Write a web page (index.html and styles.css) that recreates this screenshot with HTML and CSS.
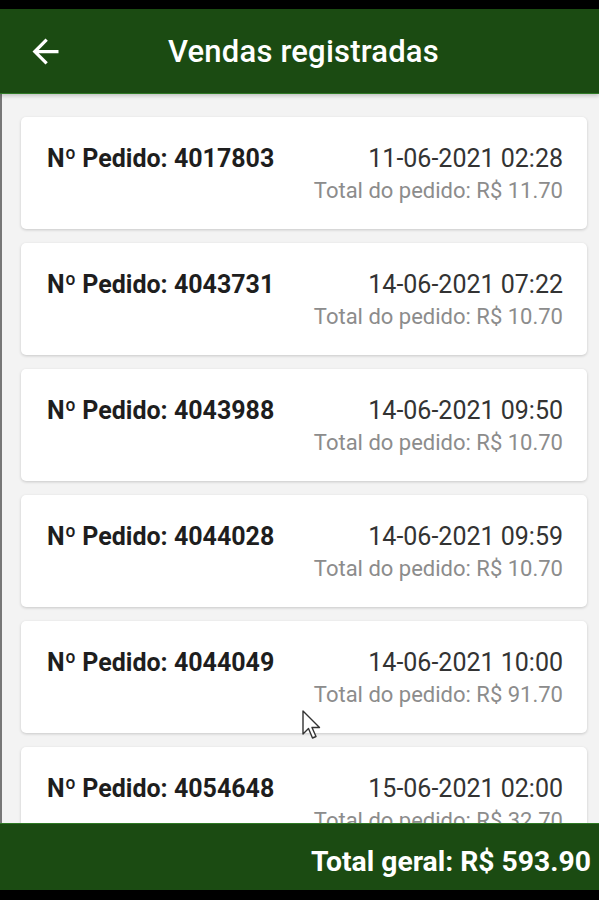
FILE: index.html
```html
<!DOCTYPE html>
<html lang="pt-BR">
<head>
    <meta charset="UTF-8">
    <meta name="viewport" content="width=device-width, initial-scale=1.0">
    <title>Vendas registradas</title>
    <link rel="stylesheet" href="styles.css">
</head>
<body>
    <div class="screen">
        <div class="status-bar"></div>

        <div class="app-bar">
            <svg class="back-icon" viewBox="0 0 24 24" width="39" height="39">
                <path d="M20 11H7.83l5.59-5.59L12 4l-8 8 8 8 1.41-1.41L7.83 13H20v-2z" fill="#fff"/>
            </svg>
            <h1 class="app-title">Vendas registradas</h1>
        </div>

        <div class="order-list">
            <div class="order-card">
                <div class="order-number">Nº Pedido: 4017803</div>
                <div class="order-meta">
                    <div class="order-date">11-06-2021 02:28</div>
                    <div class="order-total">Total do pedido: R$ 11.70</div>
                </div>
            </div>
            <div class="order-card">
                <div class="order-number">Nº Pedido: 4043731</div>
                <div class="order-meta">
                    <div class="order-date">14-06-2021 07:22</div>
                    <div class="order-total">Total do pedido: R$ 10.70</div>
                </div>
            </div>
            <div class="order-card">
                <div class="order-number">Nº Pedido: 4043988</div>
                <div class="order-meta">
                    <div class="order-date">14-06-2021 09:50</div>
                    <div class="order-total">Total do pedido: R$ 10.70</div>
                </div>
            </div>
            <div class="order-card">
                <div class="order-number">Nº Pedido: 4044028</div>
                <div class="order-meta">
                    <div class="order-date">14-06-2021 09:59</div>
                    <div class="order-total">Total do pedido: R$ 10.70</div>
                </div>
            </div>
            <div class="order-card">
                <div class="order-number">Nº Pedido: 4044049</div>
                <div class="order-meta">
                    <div class="order-date">14-06-2021 10:00</div>
                    <div class="order-total">Total do pedido: R$ 91.70</div>
                </div>
            </div>
            <div class="order-card">
                <div class="order-number">Nº Pedido: 4054648</div>
                <div class="order-meta">
                    <div class="order-date">15-06-2021 02:00</div>
                    <div class="order-total">Total do pedido: R$ 32.70</div>
                </div>
            </div>

            <!-- mouse pointer from the capture -->
            <svg class="pointer" viewBox="0 0 20 30" width="20" height="30">
                <path d="M1 1 L1 24 L6.5 18.5 L10.5 28 L14 26.5 L10 17.5 L17.5 17.5 Z" fill="#fff" stroke="#333" stroke-width="1.4" stroke-linejoin="round"/>
            </svg>
        </div>

        <div class="footer-bar">
            <span class="grand-total">Total geral: R$ 593.90</span>
        </div>

        <div class="nav-bar"></div>
    </div>
</body>
</html>
```

FILE: styles.css
```css
* {
    margin: 0;
    padding: 0;
    box-sizing: border-box;
}

body {
    font-family: Roboto, 'Liberation Sans', Arial, sans-serif;
    background-color: #000;
}

.screen {
    width: 599px;
    height: 900px;
    display: flex;
    flex-direction: column;
    overflow: hidden;
}

.status-bar {
    height: 9px;
    background-color: #000;
}

.app-bar {
    height: 85px;
    background-color: #1b4b12;
    border-bottom: 1px solid #2f7a25;
    display: flex;
    align-items: center;
    padding-left: 26px;
    box-shadow: 0 2px 4px rgba(0,0,0,0.2);
    position: relative;
    z-index: 1;
}

.back-icon {
    flex-shrink: 0;
}

.app-title {
    margin-left: 103px;
    color: #fff;
    font-size: 31px;
    font-weight: 500;
    letter-spacing: 0.2px;
}

.order-list {
    flex: 1;
    position: relative;
    overflow: hidden;
    background-color: #f3f3f3;
    border-left: 2px solid #777;
    padding: 23px 12px 0 19px;
    display: flex;
    flex-direction: column;
    gap: 14px;
}

.order-card {
    flex-shrink: 0;
    height: 112px;
    background-color: #fff;
    border-radius: 5px;
    box-shadow: 0 1px 3px rgba(0,0,0,0.18);
    display: flex;
    justify-content: space-between;
    align-items: flex-start;
    padding: 25px 24px 0 26px;
}

.order-number {
    font-size: 25px;
    font-weight: 700;
    color: #1e1e1e;
    margin-top: 2px;
}

.order-meta {
    text-align: right;
    margin-top: 2px;
}

.order-date {
    font-size: 25px;
    color: #333;
    line-height: 30px;
}

.order-total {
    font-size: 22px;
    color: #8c8c8c;
    line-height: 34px;
}

.pointer {
    position: absolute;
    left: 300px;
    top: 616px;
}

.footer-bar {
    height: 67px;
    background-color: #1b4b12;
    border-top: 1px solid #2f7a25;
    display: flex;
    align-items: center;
    justify-content: flex-end;
    padding: 9px 8px 0 0;
}

.grand-total {
    color: #fff;
    font-size: 28.3px;
    font-weight: 700;
}

.nav-bar {
    height: 10px;
    background-color: #000;
}
```
